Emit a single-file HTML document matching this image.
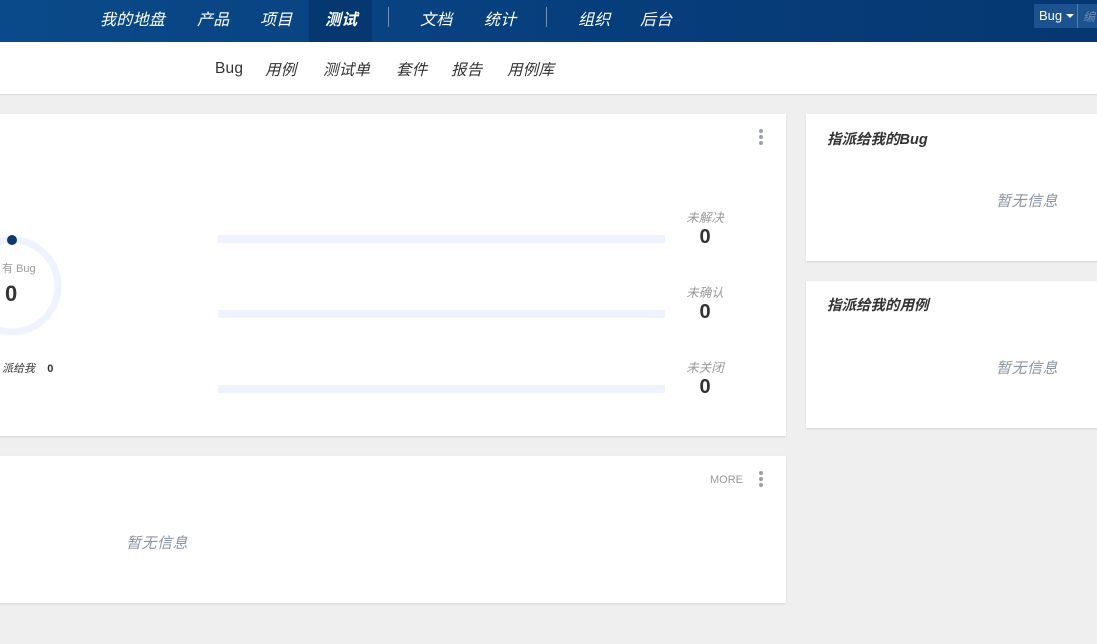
<!DOCTYPE html>
<html><head><meta charset="utf-8"><style>
*{margin:0;padding:0;box-sizing:border-box}
body{width:1097px;height:644px;overflow:hidden;background:#efefef;font-family:"Liberation Sans","Noto Sans CJK SC",sans-serif;position:relative}
.a{position:absolute}
.top{left:0;top:0;width:1097px;height:42px;background:linear-gradient(90deg,#0b4a8a,#063d7a 60%,#053872)}
.nav{color:#fff;font-size:16px;font-style:italic;top:6px;letter-spacing:0.3px}
.sub{left:0;top:42px;width:1097px;height:53px;background:#fff;border-bottom:1px solid #d8d8d8}
.sn{top:58px;font-size:15.5px;font-style:italic;color:#333;letter-spacing:0.2px}
.card{background:#fff;box-shadow:0 1px 2px rgba(0,0,0,.12)}
.dots{width:4px}
.dots i{display:block;width:4px;height:4px;border-radius:2px;background:#9aa0a8;margin-bottom:2px}
.bar{left:218px;width:447px;height:8px;background:#eef3fd}
.lbl{font-size:12.5px;font-style:italic;color:#999;width:40px;text-align:center;white-space:nowrap}
.num{font-size:20px;font-weight:bold;color:#333;width:40px;text-align:center}
.empty{font-size:15px;font-style:italic;color:#8a94a3;letter-spacing:0.5px}
.t{font-size:14.5px;font-weight:bold;font-style:italic;color:#333}
</style></head><body>
<div class="a top"></div>
<div class="a" style="left:309px;top:0;width:63px;height:42px;background:#053770"></div>
<div class="a nav" style="left:100px">我的地盘</div>
<div class="a nav" style="left:197px">产品</div>
<div class="a nav" style="left:260px">项目</div>
<div class="a nav" style="left:325px;font-weight:bold">测试</div>
<div class="a" style="left:388px;top:7px;width:1px;height:20px;background:#6d8fb8"></div>
<div class="a nav" style="left:420px">文档</div>
<div class="a nav" style="left:484px">统计</div>
<div class="a" style="left:546px;top:7px;width:1px;height:20px;background:#6d8fb8"></div>
<div class="a nav" style="left:578px">组织</div>
<div class="a nav" style="left:640px">后台</div>
<div class="a" style="left:1034px;top:4px;width:63px;height:24px;background:#1d5290"></div>
<div class="a" style="left:1039px;top:8px;color:#fff;font-size:13px">Bug</div>
<div class="a" style="left:1066px;top:14px;width:0;height:0;border-left:4px solid transparent;border-right:4px solid transparent;border-top:4px solid #fff"></div>
<div class="a" style="left:1077px;top:4px;width:1px;height:24px;background:#5b80ad"></div>
<div class="a" style="left:1083px;top:8px;color:#6b8bb3;font-size:12px;font-style:italic">编</div>
<div class="a sub"></div>
<div class="a sn" style="left:215px;font-style:normal;top:60px">Bug</div>
<div class="a sn" style="left:265px">用例</div>
<div class="a sn" style="left:323px">测试单</div>
<div class="a sn" style="left:396px">套件</div>
<div class="a sn" style="left:451px">报告</div>
<div class="a sn" style="left:507px">用例库</div>

<div class="a card" style="left:0;top:114px;width:786px;height:322px"></div>
<div class="a dots" style="left:759px;top:129px"><i></i><i></i><i></i></div>
<svg class="a" style="left:0;top:230px" width="70" height="110"><circle cx="12" cy="56" r="46" fill="none" stroke="#eef3fd" stroke-width="7"/><circle cx="12" cy="10" r="5" fill="#0d3a73"/></svg>
<div class="a" style="left:2px;top:260px;font-size:11px;color:#999">有 Bug</div>
<div class="a" style="left:5px;top:281px;font-size:22px;font-weight:bold;color:#333">0</div>
<div class="a" style="left:2px;top:360px;font-size:11px;color:#333;font-style:italic">派给我 &nbsp;&nbsp; <b style="font-style:normal">0</b></div>
<div class="a bar" style="top:235px"></div>
<div class="a bar" style="top:310px"></div>
<div class="a bar" style="top:385px"></div>
<div class="a lbl" style="left:685px;top:207px">未解决</div>
<div class="a num" style="left:685px;top:226px">0</div>
<div class="a lbl" style="left:685px;top:282px">未确认</div>
<div class="a num" style="left:685px;top:301px">0</div>
<div class="a lbl" style="left:685px;top:357px">未关闭</div>
<div class="a num" style="left:685px;top:376px">0</div>

<div class="a card" style="left:0;top:456px;width:786px;height:147px"></div>
<div class="a" style="left:710px;top:474px;font-size:11px;color:#999">MORE</div>
<div class="a dots" style="left:759px;top:471px"><i></i><i></i><i></i></div>
<div class="a empty" style="left:126px;top:532px">暂无信息</div>

<div class="a card" style="left:806px;top:114px;width:300px;height:147px"></div>
<div class="a t" style="left:827px;top:128px">指派给我的Bug</div>
<div class="a empty" style="left:996px;top:190px">暂无信息</div>
<div class="a card" style="left:806px;top:281px;width:300px;height:147px"></div>
<div class="a t" style="left:827px;top:294px">指派给我的用例</div>
<div class="a empty" style="left:996px;top:357px">暂无信息</div>
</body></html>
